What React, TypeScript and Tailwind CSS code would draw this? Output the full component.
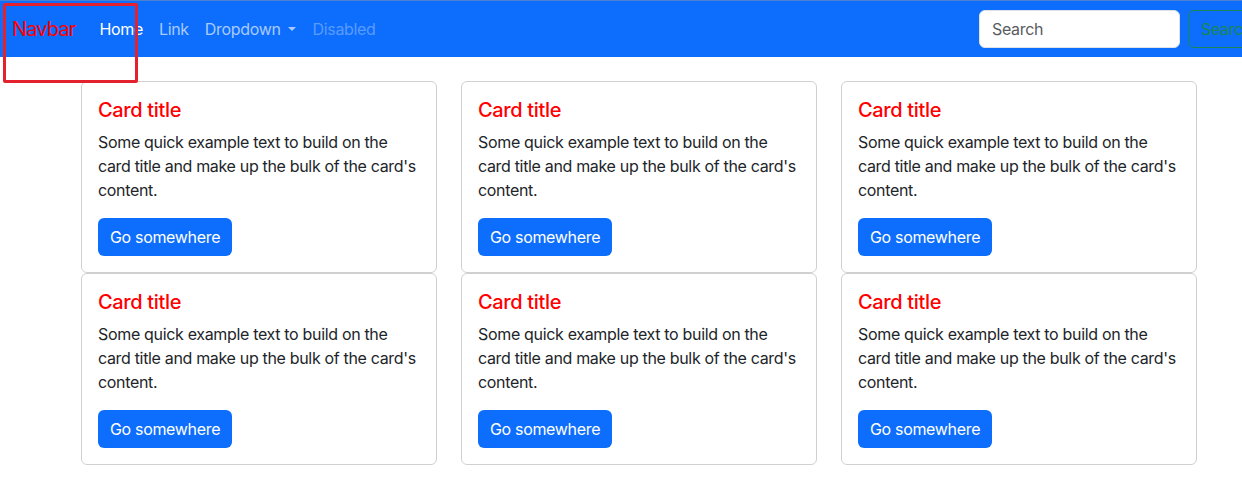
const cards = [1, 2, 3, 4, 5, 6];

function Card() {
  return (
    <div className="w-[356px] rounded-[6px] border border-[#d0d0d0] bg-white p-4">
      <h5 className="mb-2 text-[20px] font-medium leading-[24px] tracking-[-0.35px] text-[#f00]">Card title</h5>
      <p className="mb-4 text-[16px] leading-[24px] text-[#212529]">
        Some quick example text to build on the card title and make up the bulk of the card's content.
      </p>
      <button className="h-[38px] rounded-[6px] bg-[#0d6efd] px-3 text-[16px] text-white">Go somewhere</button>
    </div>
  );
}

export default function App() {
  return (
    <div className="relative min-h-[495px] overflow-hidden bg-white font-['Inter',sans-serif] tracking-[-0.33px]">
      <nav className="flex h-[57px] items-center justify-between border-t border-[#4f80cf] bg-[#0d6efd] pl-3">
        <div className="flex items-center">
          <a className="mr-4 text-[20px] leading-[30px] tracking-[-0.85px] text-[#f00]">Navbar</a>
          <ul className="flex text-[16px]">
            <li className="px-2 text-white">Home</li>
            <li className="px-2 text-[#a9caff]">Link</li>
            <li className="flex items-center gap-1 px-2 text-[#a9caff]">
              Dropdown
              <svg width="10" height="6" viewBox="0 0 10 6" className="ml-[2px]">
                <path d="M1 1l4 4 4-4z" fill="#a9caff" />
              </svg>
            </li>
            <li className="px-2 text-[#5a9bff]">Disabled</li>
          </ul>
        </div>
        <div className="mr-[-26px] flex shrink-0 items-center gap-2">
          <input
            placeholder="Search"
            className="h-[38px] w-[201px] rounded-[6px] border border-[#dee2e6] bg-white px-3 text-[16px] placeholder:text-[#595c5f]"
          />
          <button className="h-[38px] w-[80px] rounded-[6px] border border-[#198754] px-3 text-left text-[16px] text-[#198754]">
            Search
          </button>
        </div>
      </nav>
      <div className="ml-[81px] mt-[24px] grid w-[1116px] grid-cols-[356px_356px_356px] gap-x-6">
        {cards.map((c) => (
          <Card key={c} />
        ))}
      </div>
      <div className="pointer-events-none absolute left-[3px] top-[3px] h-[80px] w-[135px] rounded-[2px] border-[3px] border-[#e4222d]" />
    </div>
  );
}
